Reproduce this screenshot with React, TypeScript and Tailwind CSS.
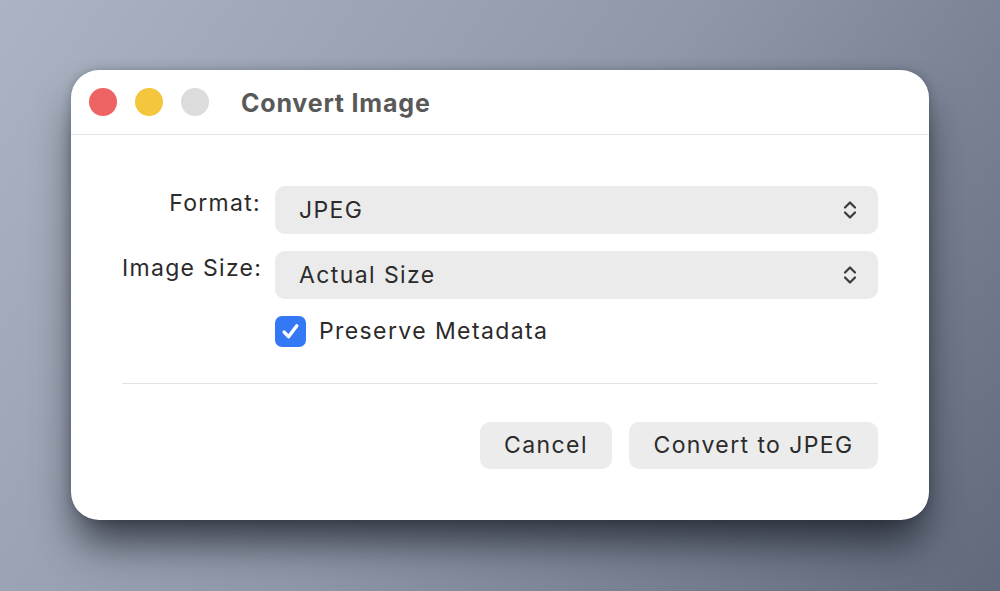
import { useState } from 'react';

function UpDown() {
  return (
    <svg width="16" height="20" viewBox="0 0 16 20" fill="none" stroke="#3a3a3a" strokeWidth="2.2" strokeLinecap="round" strokeLinejoin="round">
      <path d="M3 7.5 8 2.5l5 5" />
      <path d="M3 12.5 8 17.5l5-5" />
    </svg>
  );
}

function Popup({ value }: { value: string }) {
  return (
    <div className="flex h-[48px] items-center justify-between rounded-[10px] bg-[#ebebeb] pl-[24px] pr-[20px] text-[23px] tracking-[1.4px] text-[#2b2b2b]">
      <span>{value}</span>
      <UpDown />
    </div>
  );
}

export default function App() {
  const [preserve, setPreserve] = useState(true);

  return (
    <div
      className="flex h-[591px] w-[1000px] items-start justify-center bg-[linear-gradient(125deg,#acb4c3_0%,#8f98a9_50%,#616a7b_100%)] pt-[70px]"
      style={{ fontFamily: 'Inter, "Noto Sans", sans-serif' }}
    >
      <div className="flex h-[450px] w-[858px] flex-col rounded-[28px] bg-white shadow-[0_28px_40px_-6px_rgba(20,24,34,0.75),0_0_10px_rgba(20,24,34,0.25)]">
        {/* title bar */}
        <div className="flex h-[65px] shrink-0 items-center border-b border-[#e4e4e4] pl-[18px]">
          <div className="flex gap-[18px]">
            <span className="h-[28px] w-[28px] rounded-full bg-[#ee6363]" />
            <span className="h-[28px] w-[28px] rounded-full bg-[#f4c63d]" />
            <span className="h-[28px] w-[28px] rounded-full bg-[#dcdcdc]" />
          </div>
          <h1 className="ml-[32px] mt-[3px] text-[25px] font-bold tracking-[0.8px] text-[#595959]">Convert Image</h1>
        </div>

        <div className="flex flex-col px-[51px] pt-[51px]">
          <div className="grid grid-cols-[139px_1fr] items-center gap-x-[14px] gap-y-[17px]">
            <label className="-mt-[14px] whitespace-nowrap text-right text-[23px] tracking-[1.3px] text-[#2b2b2b]">Format:</label>
            <Popup value="JPEG" />
            <label className="-mt-[14px] whitespace-nowrap text-right text-[23px] tracking-[1.3px] text-[#2b2b2b]">Image Size:</label>
            <Popup value="Actual Size" />
          </div>

          <div className="mt-[17px] flex h-[31px] items-center gap-[13px] pl-[153px]">
            <button
              type="button"
              onClick={() => setPreserve(!preserve)}
              className={`flex h-[31px] w-[31px] items-center justify-center rounded-[7px] ${preserve ? 'bg-[#3478f6]' : 'border border-[#c8c8c8] bg-white'}`}
            >
              {preserve && (
                <svg width="23" height="23" viewBox="0 0 20 20" fill="none" stroke="white" strokeWidth="3" strokeLinecap="round" strokeLinejoin="round">
                  <path d="M4.5 10.5 8.3 14.5 15.5 5" />
                </svg>
              )}
            </button>
            <span className="text-[23px] leading-none tracking-[1.4px] text-[#2b2b2b]">Preserve Metadata</span>
          </div>

          <div className="mt-[36px] h-px bg-[#e2e2e2]" />

          <div className="mt-[38px] flex justify-end gap-[17px]">
            <button type="button" className="h-[47px] w-[132px] rounded-[10px] bg-[#ececec] text-[23px] tracking-[1.4px] text-[#2b2b2b]">
              Cancel
            </button>
            <button type="button" className="h-[47px] w-[249px] rounded-[10px] bg-[#ececec] text-[23px] tracking-[1.4px] text-[#2b2b2b]">
              Convert to JPEG
            </button>
          </div>
        </div>
      </div>
    </div>
  );
}
